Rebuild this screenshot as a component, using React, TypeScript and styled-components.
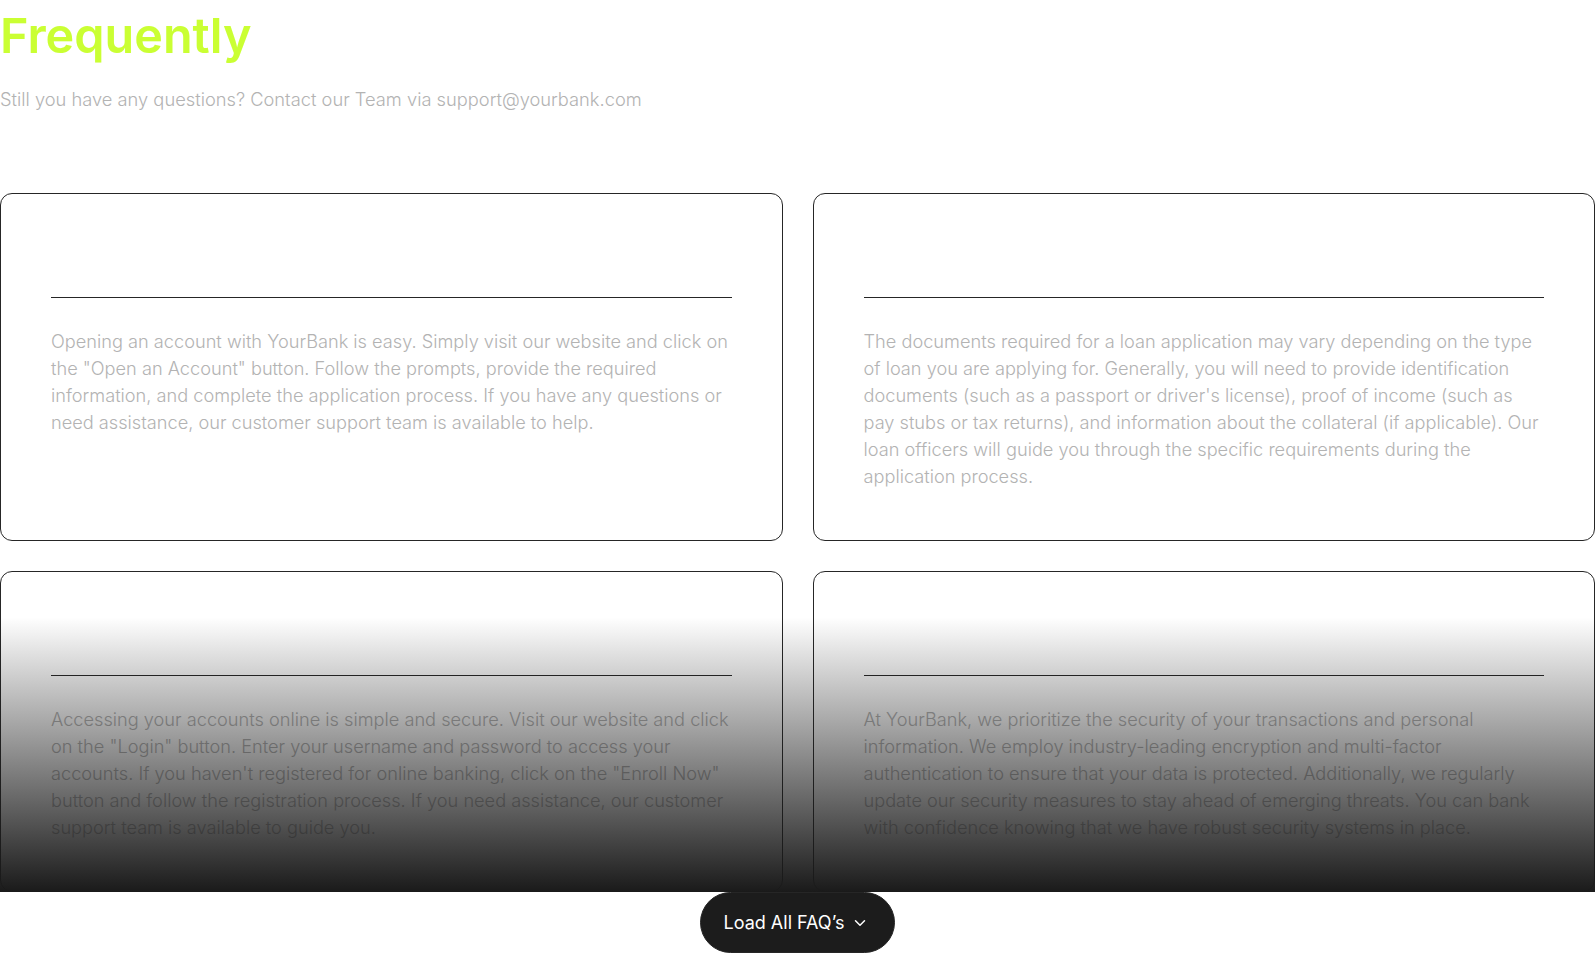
import { FunctionComponent } from "react";
import styled, { createGlobalStyle } from "styled-components";
import { ChevronDown } from "lucide-react";

type Faq = {
  id: number;
  answer: string;
};

const faqs: Faq[] = [
  {
    id: 1,
    answer:
      'Opening an account with YourBank is easy. Simply visit our website and click on the "Open an Account" button. Follow the prompts, provide the required information, and complete the application process. If you have any questions or need assistance, our customer support team is available to help.',
  },
  {
    id: 2,
    answer:
      "The documents required for a loan application may vary depending on the type of loan you are applying for. Generally, you will need to provide identification documents (such as a passport or driver's license), proof of income (such as pay stubs or tax returns), and information about the collateral (if applicable). Our loan officers will guide you through the specific requirements during the application process.",
  },
  {
    id: 3,
    answer:
      'Accessing your accounts online is simple and secure. Visit our website and click on the "Login" button. Enter your username and password to access your accounts. If you haven\'t registered for online banking, click on the "Enroll Now" button and follow the registration process. If you need assistance, our customer support team is available to guide you.',
  },
  {
    id: 4,
    answer:
      "At YourBank, we prioritize the security of your transactions and personal information. We employ industry-leading encryption and multi-factor authentication to ensure that your data is protected. Additionally, we regularly update our security measures to stay ahead of emerging threats. You can bank with confidence knowing that we have robust security systems in place.",
  },
];

const App: FunctionComponent = () => {
  return (
    <>
      <GlobalStyle />
      <Section>
        <Header>
          <Title>Frequently</Title>
          <Subtitle>Still you have any questions? Contact our Team via support@yourbank.com</Subtitle>
        </Header>
        <CardsWrapper>
          <Grid>
            {faqs.map((faq) => (
              <Card key={faq.id}>
                <QuestionRow />
                <Divider />
                <Answer>{faq.answer}</Answer>
              </Card>
            ))}
          </Grid>
          <Fade />
        </CardsWrapper>
        <LoadButton type="button">
          Load All FAQ’s
          <ChevronDown size={18} strokeWidth={2} />
        </LoadButton>
      </Section>
    </>
  );
};

export default App;

const GlobalStyle = createGlobalStyle`
  body {
    margin: 0;
    background: #ffffff;
    font-family: Inter, "Liberation Sans", sans-serif;
  }
`;

const Section = styled.section`
  display: flex;
  flex-direction: column;
  align-items: center;
  width: 100%;
`;

const Header = styled.div`
  align-self: stretch;
  display: flex;
  flex-direction: column;
`;

const Title = styled.h2`
  margin: 0;
  font-size: 48.5px;
  line-height: 72px;
  font-weight: 600;
  color: #caff33;
`;

const Subtitle = styled.p`
  margin: 14px 0 0;
  font-size: 18.3px;
  line-height: 27px;
  font-weight: 300;
  color: #b3b3b3;
`;

const CardsWrapper = styled.div`
  position: relative;
  align-self: stretch;
  margin-top: 80px;
`;

const Grid = styled.div`
  display: grid;
  grid-template-columns: 1fr 1fr;
  gap: 30px;
`;

const Card = styled.div`
  display: flex;
  flex-direction: column;
  padding: 50px;
  border: 1px solid #262626;
  border-radius: 12px;
  background: #ffffff;
`;

const QuestionRow = styled.div`
  height: 33px;
  margin-bottom: 20px;
`;

const Divider = styled.hr`
  margin: 0;
  border: none;
  border-top: 1px solid #262626;
`;

const Answer = styled.p`
  margin: 30px 0 0;
  font-size: 18.2px;
  line-height: 27px;
  font-weight: 300;
  color: #b3b3b3;
`;

const Fade = styled.div`
  position: absolute;
  left: 0;
  right: 0;
  bottom: 0;
  height: 275px;
  background: linear-gradient(180deg, rgba(26, 26, 26, 0) 0%, #1a1a1a 100%);
  pointer-events: none;
`;

const LoadButton = styled.button`
  display: flex;
  align-items: center;
  gap: 7px;
  height: 61px;
  padding: 0 25px 0 23px;
  border: 1px solid #262626;
  border-radius: 100px;
  background: #1c1c1c;
  color: #ffffff;
  font-family: Inter, "Liberation Sans", sans-serif;
  font-size: 18px;
  font-weight: 400;
  cursor: pointer;
`;
